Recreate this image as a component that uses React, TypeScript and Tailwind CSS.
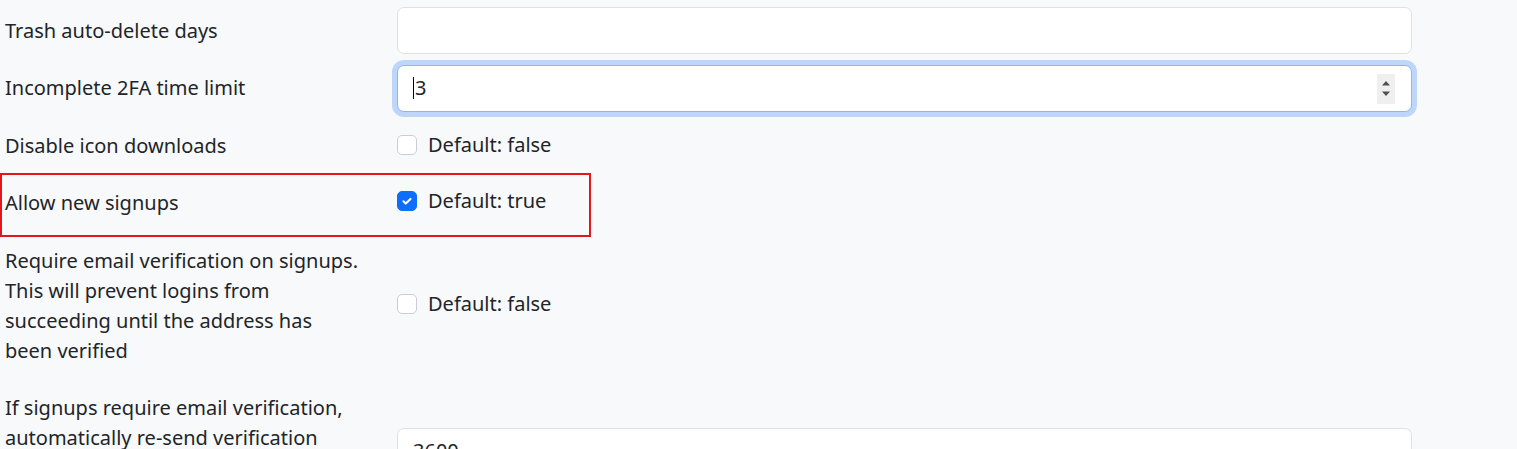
import React from "react";

const font = { fontFamily: '"Noto Sans", "Open Sans", sans-serif' };

function Checkbox({ checked }: { checked?: boolean }) {
  return checked ? (
    <span className="flex h-[20px] w-[20px] shrink-0 items-center justify-center rounded-[5px] border border-[#0d6efd] bg-[#0d6efd]">
      <svg width="14" height="14" viewBox="0 0 20 20" fill="none">
        <path d="M5 10.5l3.2 3.2L15 7" stroke="#fff" strokeWidth="3" strokeLinecap="round" strokeLinejoin="round" />
      </svg>
    </span>
  ) : (
    <span className="h-[20px] w-[20px] shrink-0 rounded-[5px] border border-[#c9ced4] bg-white" />
  );
}

function Row({ label, children }: { label: React.ReactNode; children: React.ReactNode }) {
  return (
    <div className="mb-[10px] flex items-center">
      <div className="mr-[30px] w-[362px] shrink-0 py-[8.75px] leading-[30px]">{label}</div>
      <div className="flex w-[1015px] items-center">{children}</div>
    </div>
  );
}

export default function App() {
  return (
    <div
      className="relative h-[449px] w-[1517px] overflow-hidden bg-[#f8f9fa] pl-[5px] pt-[7px] text-[20px] text-[#212529]"
      style={font}
    >
      <Row label="Trash auto-delete days">
        <div className="h-[47px] w-full rounded-[7px] border border-[#dee2e6] bg-white" />
      </Row>
      <Row label="Incomplete 2FA time limit">
        <div className="relative flex h-[47px] w-full items-center rounded-[7px] border border-[#86b7fe] bg-white pl-[15px] shadow-[0_0_0_5px_rgba(13,110,253,0.25)]">
          <span className="mr-[1px] h-[22px] w-px bg-black" />
          <span>3</span>
          <div className="absolute right-[16px] top-[8px] flex h-[30px] w-[18px] flex-col items-center justify-center gap-[5px] bg-[#efefef]">
            <svg width="10" height="6" viewBox="0 0 10 6"><path d="M1 5.5L5 1l4 4.5z" fill="#505050" /></svg>
            <svg width="10" height="6" viewBox="0 0 10 6"><path d="M1 0.5L5 5l4-4.5z" fill="#505050" /></svg>
          </div>
        </div>
      </Row>
      <Row label="Disable icon downloads">
        <div className="flex h-[47px] -translate-y-[1px] items-center gap-[11px]">
          <Checkbox />
          <span>Default: false</span>
        </div>
      </Row>
      <Row label="Allow new signups">
        <div className="flex h-[47px] -translate-y-[2px] items-center gap-[11px]">
          <Checkbox checked />
          <span>Default: true</span>
        </div>
      </Row>
      <Row
        label={
          <>
            <span className="block">Require email verification on signups.</span>
            <span className="block">This will prevent logins from</span>
            <span className="block">succeeding until the address has</span>
            <span className="block">been verified</span>
          </>
        }
      >
        <div className="flex h-[47px] -translate-y-[2px] items-center gap-[11px]">
          <Checkbox />
          <span>Default: false</span>
        </div>
      </Row>
      <Row
        label={
          <>
            <span className="block">If signups require email verification,</span>
            <span className="block">automatically re-send verification</span>
            <span className="block">email on login attempts after this</span>
            <span className="block">many seconds</span>
          </>
        }
      >
        <div className="flex h-[47px] w-full -translate-y-[2px] items-center rounded-[7px] border border-[#dee2e6] bg-white pl-[15px]">
          <span>3600</span>
        </div>
      </Row>
      <div className="pointer-events-none absolute left-0 top-[173px] h-[64px] w-[591px] border-2 border-[#e3151f]" />
    </div>
  );
}
